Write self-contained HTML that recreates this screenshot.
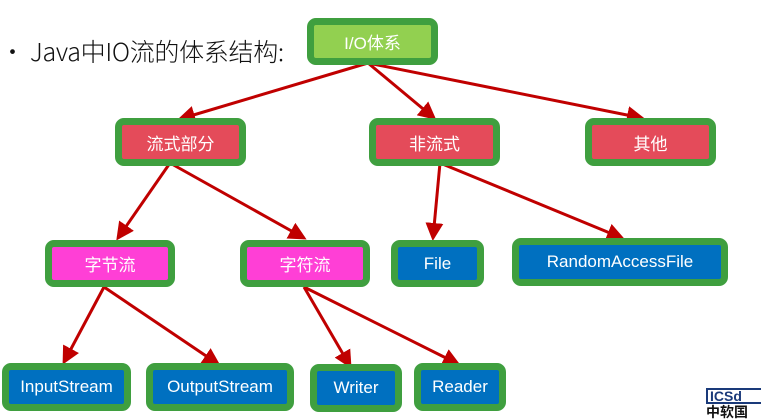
<!DOCTYPE html>
<html><head><meta charset="utf-8"><style>
body{margin:0;width:761px;height:418px;background:#fff;position:relative;overflow:hidden;font-family:"Liberation Sans","Noto Sans CJK SC",sans-serif}
.b{position:absolute;box-sizing:border-box;border:7px solid #3f9f3f;border-radius:9px;color:#fff;font-size:17px;display:flex;align-items:center;justify-content:center}
.g{background:#92d050}.r{background:#e44b5a}.p{background:#ff3fd6}.u{background:#0070c0}
.t{position:absolute;left:0px;top:33px;font-size:25px;color:#111;font-family:"Noto Sans CJK SC","Liberation Sans",sans-serif;font-weight:300;letter-spacing:-0.3px}
</style></head><body>
<div class="t">• Java中IO流的体系结构:</div>
<svg width="761" height="418" style="position:absolute;left:0;top:0">
<defs><marker id="a" markerWidth="6" markerHeight="6" refX="5" refY="3" orient="auto" markerUnits="strokeWidth"><path d="M0,0 L6,3 L0,6z" fill="#c00000"/></marker></defs>
<g stroke="#c00000" stroke-width="3" fill="none" marker-end="url(#a)">
<line x1="368" y1="63" x2="180" y2="119"/>
<line x1="368" y1="63" x2="434" y2="118"/>
<line x1="368" y1="63" x2="642" y2="118"/>
<line x1="170" y1="163" x2="118" y2="238"/>
<line x1="170" y1="163" x2="304" y2="238"/>
<line x1="440" y1="163" x2="433" y2="238"/>
<line x1="440" y1="163" x2="622" y2="238"/>
<line x1="104" y1="287" x2="64" y2="362"/>
<line x1="104" y1="287" x2="218" y2="364"/>
<line x1="304" y1="287" x2="350" y2="366"/>
<line x1="304" y1="287" x2="458" y2="364"/>
</g></svg>
<div class="b g" style="left:307px;top:18px;width:131px;height:47px">I/O体系</div>
<div class="b r" style="left:115px;top:118px;width:131px;height:48px">流式部分</div>
<div class="b r" style="left:369px;top:118px;width:131px;height:48px">非流式</div>
<div class="b r" style="left:585px;top:118px;width:131px;height:48px">其他</div>
<div class="b p" style="left:45px;top:240px;width:130px;height:47px">字节流</div>
<div class="b p" style="left:240px;top:240px;width:130px;height:47px">字符流</div>
<div class="b u" style="left:391px;top:240px;width:93px;height:47px">File</div>
<div class="b u" style="left:512px;top:238px;width:216px;height:48px">RandomAccessFile</div>
<div class="b u" style="left:2px;top:363px;width:129px;height:48px">InputStream</div>
<div class="b u" style="left:146px;top:363px;width:148px;height:48px">OutputStream</div>
<div class="b u" style="left:310px;top:364px;width:92px;height:48px">Writer</div>
<div class="b u" style="left:414px;top:363px;width:92px;height:48px">Reader</div>
<div style="position:absolute;left:706px;top:388px;width:60px;height:16px;background:#fff;border:2px solid #1a3a7a;box-sizing:border-box;color:#1a3a7a;font-weight:bold;font-size:14px;line-height:12px;padding-left:2px">ICSd</div>
<div style="position:absolute;left:706px;top:405px;font-size:14px;font-weight:bold;color:#111;line-height:14px">中软国</div>
</body></html>
